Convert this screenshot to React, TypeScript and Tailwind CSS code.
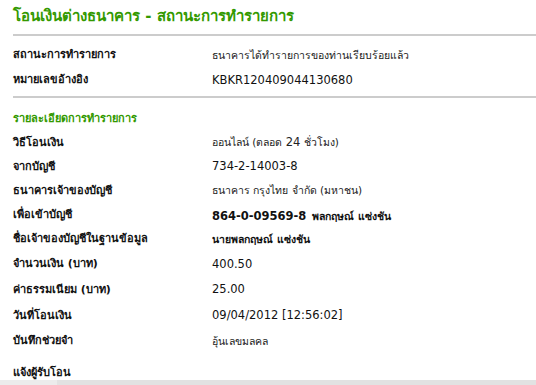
import React from "react";

type Row = {
  label: string;
  value: React.ReactNode;
  h: string;
};

const thai = "font-['Tahoma','DejaVu_Sans','Noto_Sans',sans-serif]";
const num = "font-['Verdana','DejaVu_Sans',sans-serif] text-[11.5px] text-[#111]";
const thaiVal = "text-[10.5px] text-[#222]";

const statusRows: Row[] = [
  { label: "สถานะการทำรายการ", value: <span className={thaiVal}>ธนาคารได้ทำรายการของท่านเรียบร้อยแล้ว</span>, h: "h-[25px]" },
  { label: "หมายเลขอ้างอิง", value: <span className={num}>KBKR120409044130680</span>, h: "h-[25px]" },
];

const detailRows: Row[] = [
  {
    label: "วิธีโอนเงิน",
    value: (
      <span className={thaiVal}>
        ออนไลน์ (ตลอด <span className="text-[11.5px]">24</span> ชั่วโมง)
      </span>
    ),
    h: "h-[24px]",
  },
  { label: "จากบัญชี", value: <span className={num}>734-2-14003-8</span>, h: "h-[24px]" },
  { label: "ธนาคารเจ้าของบัญชี", value: <span className={thaiVal}>ธนาคาร กรุงไทย จำกัด (มหาชน)</span>, h: "h-[24px]" },
  {
    label: "เพื่อเข้าบัญชี",
    value: (
      <span className="font-bold text-[#111]">
        <span className={num + " font-bold"}>864-0-09569-8</span>{" "}
        <span className="text-[10.5px]">พลกฤษณ์ แซ่งชัน</span>
      </span>
    ),
    h: "h-[24px]",
  },
  { label: "ชื่อเจ้าของบัญชีในฐานข้อมูล", value: <span className="text-[10.5px] font-bold text-[#111]">นายพลกฤษณ์ แซ่งชัน</span>, h: "h-[25px]" },
  { label: "จำนวนเงิน (บาท)", value: <span className={num}>400.50</span>, h: "h-[25px]" },
  { label: "ค่าธรรมเนียม (บาท)", value: <span className={num}>25.00</span>, h: "h-[26px]" },
  { label: "วันที่โอนเงิน", value: <span className={num}>09/04/2012 [12:56:02]</span>, h: "h-[26px]" },
  { label: "บันทึกช่วยจำ", value: <span className={thaiVal}>อุ้นเลขมลคล</span>, h: "h-[25px]" },
  { label: "แจ้งผู้รับโอน", value: null, h: "h-[26px] pt-[12px]" },
];

function InfoRow({ row }: { row: Row }) {
  return (
    <div className={"flex items-center " + row.h}>
      <div className="w-[199px] shrink-0 text-[11px] font-bold text-[#111]">{row.label}</div>
      <div className="flex items-center">{row.value}</div>
    </div>
  );
}

export default function App() {
  return (
    <div className={"h-[385px] w-[536px] overflow-hidden bg-white " + thai}>
      <div className="pl-[13px]">
        {/* Title */}
        <div className="flex h-[34px] items-center pb-[2px] text-[15px] font-bold text-[#339900]">
          โอนเงินต่างธนาคาร - สถานะการทำรายการ
        </div>
        <div className="h-[2px] bg-[#cccccc]" />

        {/* Status */}
        <div className="pt-[7px] pb-[3px]">
          {statusRows.map((r) => (
            <InfoRow key={r.label} row={r} />
          ))}
        </div>
        <div className="h-[2px] bg-[#cccccc]" />

        {/* Details */}
        <div className="flex h-[33px] items-center pt-[9px] text-[11px] font-bold text-[#339900]">
          รายละเอียดการทำรายการ
        </div>
        {detailRows.map((r) => (
          <InfoRow key={r.label} row={r} />
        ))}
      </div>
      <div className="flex h-[5px]">
        <div className="w-[57px] bg-[#ececec]" />
        <div className="flex-1 bg-[#e2e2e2]" />
      </div>
    </div>
  );
}
